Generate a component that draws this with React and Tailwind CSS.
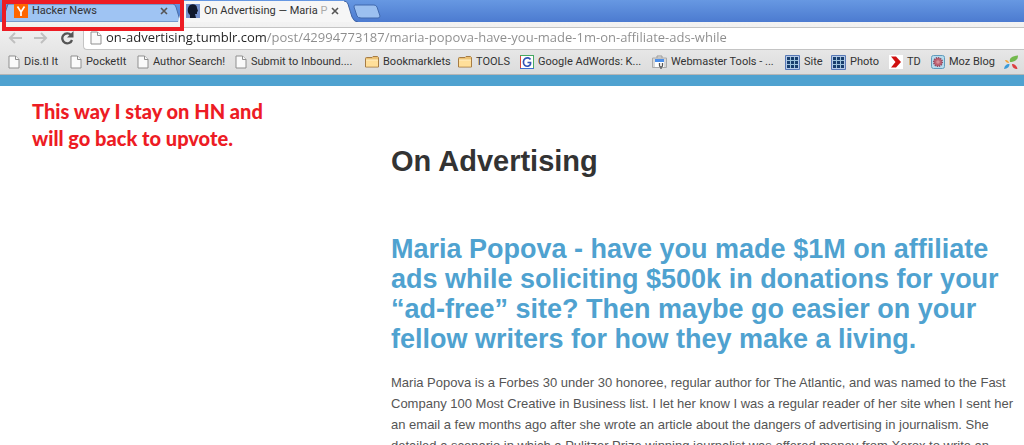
import { useState } from 'react'

function PageIcon({ className = 'h-3.5 w-3' }) {
  return (
    <svg viewBox="0 0 12 14" className={`shrink-0 ${className}`} fill="#fafafa" stroke="#8f8f8f">
      <path d="M1 1h6.5L11 4.500V13H1z" />
      <path d="M7.500 1v3.500H11" />
    </svg>
  )
}

function FolderIcon() {
  return (
    <svg viewBox="0 0 14 12" className="h-3 w-3.5 shrink-0">
      <path d="M.5 11V2.500Q.5 1.500 1.500 1.500H7l1-1h4.500l1 1V11z" fill="#ecc172" stroke="#a67c45" />
      <path d="M1 4h12v6.500H1z" fill="#ffdf9a" />
      <path d="M1 4h12" stroke="#fff0c8" />
    </svg>
  )
}

function GoogleIcon() {
  return (
    <svg viewBox="0 0 14 14" className="size-3.5 shrink-0">
      <path d="M0 0h14v14H0z" fill="#fff" />
      <path d="M.5 14V.5" stroke="#d5463c" />
      <path d="M0 .5h14M13.500 0v14" stroke="#45a862" />
      <path d="M0 13.500h14" stroke="#3f6fd0" />
      <path d="M10.500 4.500C9.500 2.800 7 2.400 5.200 3.500 3 4.900 2.800 8.700 4.800 10.400c1.800 1.500 5.200 1 5.700-1.400V7.500H7.500" fill="none" stroke="#3353b5" strokeWidth="1.700" />
    </svg>
  )
}

function ToolsIcon() {
  return (
    <svg viewBox="0 0 15 14" className="h-3.5 w-[15px] shrink-0">
      <path d="M5 3V1h5v2" fill="none" stroke="#999" />
      <path d="M.5 3h14v9.500H.5z" fill="#d8d8d8" stroke="#aaa" />
      <path d="M3 4h9v8H3z" fill="#fff" />
      <path d="M3 4h9v3H3z" fill="#4c8fea" />
      <path d="M7.500 8v2.500a1.500 1.500 0 0 0 3 0V8M9 11.500V14" fill="none" stroke="#555" strokeWidth="1.300" />
    </svg>
  )
}

function GridIcon() {
  return (
    <svg viewBox="0 0 15 15" className="size-[15px] shrink-0">
      <path d="M.5.5h14v14H.5z" fill="#b5cae8" stroke="#5778b5" />
      <path d="M2 2h11v11H2z" fill="#183e6e" />
      <path d="M5.500 2v11M9.500 2v11M2 5.500h11M2 9.500h11" stroke="#9dc3dc" />
    </svg>
  )
}

function ChevronIcon() {
  return (
    <svg viewBox="0 0 14 14" className="size-3.5 shrink-0">
      <path d="M0 0h14v14H0z" fill="#fff" />
      <path d="M2 1.500h5l5 5.500-5 5.500H2L6.500 7z" fill="#cf1010" />
    </svg>
  )
}

function MozIcon() {
  return (
    <svg viewBox="0 0 14 14" className="size-3.5 shrink-0">
      <rect x=".5" y=".5" width="13" height="13" rx="2" fill="#b5dcee" stroke="#609bbc" />
      <circle cx="7" cy="7" r="4.300" fill="#bd6272" stroke="#8f4b60" strokeWidth="1.500" strokeDasharray="1.200 1" />
      <circle cx="7" cy="7" r="1.800" fill="#d8909a" />
    </svg>
  )
}

function PetalsIcon() {
  return (
    <svg viewBox="0 0 15 15" className="size-[15px] shrink-0">
      <path d="M6 7C5 3 8 1 14 .500c0 4-3 6.500-8 6.500z" fill="#73b94d" />
      <path d="M5 8C3 8 1.500 7 1 5c2-.5 4 1 4 3z" fill="#f2a33b" />
      <path d="M5.500 9c0 3-2 4.500-5.500 5C.5 11 2 9 5.500 9z" fill="#3c9bd8" />
      <path d="M8 9c3 0 5 2 5.500 5C10 14 8 12 8 9z" fill="#dd3f40" />
    </svg>
  )
}

const bookmarks = [
  { label: 'Dis.tl It', icon: PageIcon, className: 'w-[62px]' },
  { label: 'PocketIt', icon: PageIcon, className: 'w-[67px]' },
  { label: 'Author Search!', icon: PageIcon, className: 'w-[98px]' },
  { label: 'Submit to Inbound....', icon: PageIcon, className: 'w-[130px]' },
  { label: 'Bookmarklets', icon: FolderIcon, className: 'w-[93px]' },
  { label: 'TOOLS', icon: FolderIcon, className: 'w-[62px]' },
  { label: 'Google AdWords: K...', icon: GoogleIcon, className: 'w-[132px]' },
  { label: 'Webmaster Tools - ...', icon: ToolsIcon, className: 'w-[133px]' },
  { label: 'Site', icon: GridIcon, className: 'w-[46px]' },
  { label: 'Photo', icon: GridIcon, className: 'w-[58px]' },
  { label: 'TD', icon: ChevronIcon, className: 'w-[42px]' },
  { label: 'Moz Blog', icon: MozIcon, className: 'w-[73px]' },
  { label: '', icon: PetalsIcon, className: 'w-[15px]' },
]

function CloseIcon() {
  return (
    <svg viewBox="0 0 8 8" className="size-2" fill="none" stroke="#555" strokeWidth="1.600">
      <path d="M1 1l6 6M7 1L1 7" />
    </svg>
  )
}

function TabStrip() {
  return (
    <div className="relative flex h-[22px] bg-linear-to-b from-[#6798e2] to-[#4c7bd0] text-[11px] text-[#333]">
      <div className="relative flex w-[182px] items-center pl-3.5">
        <svg viewBox="0 0 182 22" className="absolute inset-0 h-[22px] w-[182px]">
          <path d="M2 22L8 4h165q2 0 3 3l3 10q1 4 3 5z" fill="#9fc4f3" stroke="#4a6fa8" />
        </svg>
        <svg viewBox="0 0 14 14" className="relative size-3.5">
          <path d="M0 0h14v14H0z" fill="#ff6600" />
          <path d="M3.500 2.500L7 8l3.500-5.500M7 8v4" fill="none" stroke="#fff" strokeWidth="1.700" />
        </svg>
        <a href="#hn" className="relative ml-1 flex-1">Hacker News</a>
        <button type="button" aria-label="Close Hacker News" className="relative mr-3.5">
          <CloseIcon />
        </button>
      </div>

      <div className="relative flex w-[171px] items-center pl-1">
        <svg viewBox="0 0 180 22" className="absolute top-0 -left-1 h-[22px] w-[180px]">
          <path d="M0 22L6 1h160q3 0 4 3l4 13q2 5 6 5z" fill="#f6f6f6" />
          <path d="M166 1q3 0 4 3l4 13q2 5 6 5" fill="none" stroke="#3f62a3" />
        </svg>
        <svg viewBox="0 0 14 14" className="relative size-3.5">
          <path d="M0 0h14v14H0z" fill="#7591cc" />
          <path d="M4 14v-3C1 9 1 3 4 1c3-1.500 7-.5 7 3l1 3-1 1v2H9l1 4z" fill="#10182c" />
        </svg>
        <a href="#post" className="relative ml-1 flex-1 whitespace-nowrap">
          On Advertising — Maria <span className="text-[#aaa]">P</span>
        </a>
        <button type="button" aria-label="Close On Advertising" className="relative mr-3.5">
          <CloseIcon />
        </button>
      </div>

      <button type="button" aria-label="New tab" className="self-start pt-1">
        <svg viewBox="0 0 28 15" className="h-[15px] w-7">
          <path d="M2 1h19q2 0 3 2l3 9q0 2-2 2H8q-3 0-4-2L1 3q0-2 1-2z" fill="#9cc0f0" stroke="#4169ad" />
        </svg>
      </button>
    </div>
  )
}

function AddressBar() {
  const [url, setUrl] = useState(
    'on-advertising.tumblr.com/post/42994773187/maria-popova-have-you-made-1m-on-affiliate-ads-while'
  )

  return (
    <div className="flex h-7 items-center pt-1">
      <div className="flex w-[83px] shrink-0 items-center gap-3 pl-2">
        <button type="button" aria-label="Back">
          <svg viewBox="0 0 14 12" className="h-3 w-3.5" fill="none" stroke="#c0c0c0" strokeWidth="2">
            <path d="M7 1L2 6l5 5M2 6h12" />
          </svg>
        </button>
        <button type="button" aria-label="Forward">
          <svg viewBox="0 0 14 12" className="h-3 w-3.5" fill="none" stroke="#c0c0c0" strokeWidth="2">
            <path d="M7 1l5 5-5 5M12 6H0" />
          </svg>
        </button>
        <button type="button" aria-label="Reload">
          <svg viewBox="0 0 14 14" className="size-3.5">
            <path d="M11 4A5 5 0 1 0 12 9" fill="none" stroke="#555" strokeWidth="2.300" />
            <path d="M13.500 0v6.500H7z" fill="#555" />
          </svg>
        </button>
      </div>
      <div className="flex h-[23px] min-w-0 flex-1 items-center rounded-l-sm border border-r-0 border-[#c4c4c4] bg-white pl-1.5">
        <PageIcon className="h-3.5 w-3" />
        <input
          type="text"
          aria-label="Address"
          value={url}
          onChange={(event) => setUrl(event.target.value)}
          className="ml-1 min-w-0 flex-1 bg-[linear-gradient(to_right,#222_161px,#8c8c8c_161px)] bg-clip-text font-['Open_Sans','Noto_Sans',sans-serif] text-[13px] text-transparent caret-black outline-none"
        />
      </div>
    </div>
  )
}

function BookmarksBar() {
  return (
    <nav className="flex h-6 items-center overflow-hidden pl-2 text-[11px] text-[#333]">
      {bookmarks.map(({ label, icon: Icon, className }, index) => (
        <a
          key={index}
          href="#bookmark"
          aria-label={label || 'Bookmark'}
          className={`flex shrink-0 items-center gap-1 whitespace-nowrap ${className}`}
        >
          <Icon />
          {label && <span>{label}</span>}
        </a>
      ))}
    </nav>
  )
}

function App() {
  return (
    <div className="flex h-screen flex-col overflow-hidden bg-white font-['Liberation_Sans',Arial,sans-serif]">
      <header className="relative shrink-0 font-[Roboto,'Open_Sans',sans-serif]">
        <TabStrip />
        <div className="border-b border-[#b5b5b5] bg-linear-to-b from-[#f3f3f3] to-[#dcdcdc]">
          <AddressBar />
          <BookmarksBar />
        </div>
        <div className="pointer-events-none absolute top-0 left-0.5 h-[31px] w-[182px] border-4 border-[#ed1c24]" />
      </header>

      <div className="h-[11px] shrink-0 bg-[#4fa2d0]" />

      <div className="flex">
        <aside className="w-[391px] shrink-0 pt-3 pl-8">
          <p className="font-[Lato,sans-serif] text-xl leading-[27px] font-black text-[#ed1c24]">
            This way I stay on HN and
            <br />
            will go back to upvote.
          </p>
        </aside>
        <main className="min-w-0 flex-1 pt-[57px] pr-1">
          <h1 className="text-[29px] leading-9 font-bold text-[#333]">On Advertising</h1>
          <h2 className="mt-[55px] text-[27px] leading-[30px] font-bold text-[#4fa2d0]">
            Maria Popova - have you made $1M on affiliate ads while soliciting $500k in donations for your
            “ad-free” site? Then maybe go easier on your fellow writers for how they make a living.
          </h2>
          <p className="mt-[18px] text-[13px] leading-[21px] text-[#555]">
            Maria Popova is a Forbes 30 under 30 honoree, regular author for The Atlantic, and was named to the Fast
            Company 100 Most Creative in Business list. I let her know I was a regular reader of her site when I sent
            her an email a few months ago after she wrote an article about the dangers of advertising in journalism. She
            detailed a scenario in which a Pulitzer Prize winning journalist was offered money from Xerox to write an
          </p>
        </main>
      </div>
    </div>
  )
}

export default App
